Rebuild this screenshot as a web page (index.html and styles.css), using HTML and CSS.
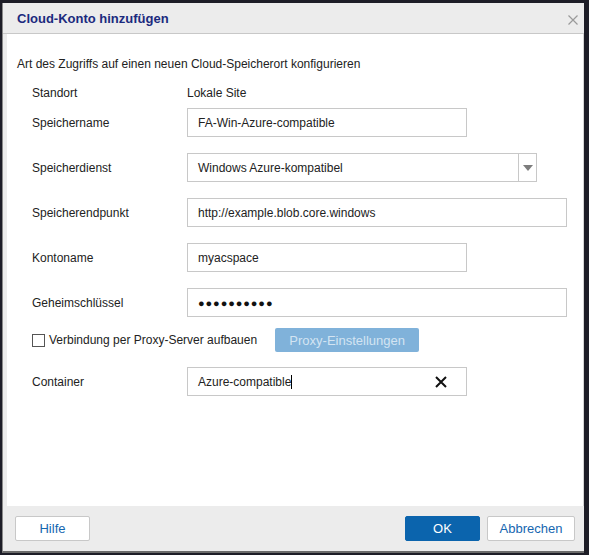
FILE: index.html
```html
<!DOCTYPE html>
<html lang="de">
<head>
    <meta charset="UTF-8">
    <title>Cloud-Konto hinzufügen</title>
    <link rel="stylesheet" href="styles.css">
</head>
<body>
    <div class="dialog">
        <div class="dlg-head">
            <h2>Cloud-Konto hinzufügen</h2>
            <svg class="close" width="10" height="10" viewBox="0 0 10 10"><path d="M0.5 0.5L9.5 9.5M9.5 0.5L0.5 9.5" stroke="#9a9a9a" stroke-width="1.2" fill="none"/></svg>
        </div>

        <div class="dlg-body">
            <p class="intro">Art des Zugriffs auf einen neuen Cloud-Speicherort konfigurieren</p>

            <div class="form">
                <div class="row row-static">
                    <label>Standort</label>
                    <span>Lokale Site</span>
                </div>
                <div class="row row-first">
                    <label>Speichername</label>
                    <input type="text" class="fld short" value="FA-Win-Azure-compatible">
                </div>
                <div class="row">
                    <label>Speicherdienst</label>
                    <div class="fld select">
                        <span class="sel-val">Windows Azure-kompatibel</span>
                        <span class="sel-btn"><svg width="10" height="6" viewBox="0 0 10 6"><path d="M0 0H10L5 6Z" fill="#7d7d7d"/></svg></span>
                    </div>
                </div>
                <div class="row">
                    <label>Speicherendpunkt</label>
                    <input type="text" class="fld long" value="http://example.blob.core.windows">
                </div>
                <div class="row">
                    <label>Kontoname</label>
                    <input type="text" class="fld short" value="myacspace">
                </div>
                <div class="row">
                    <label>Geheimschlüssel</label>
                    <div class="fld long pwd">●●●●●●●●●●</div>
                </div>
                <div class="row row-check">
                    <span class="chk"></span>
                    <span class="chk-text">Verbindung per Proxy-Server aufbauen</span>
                    <button class="proxy-btn" disabled>Proxy-Einstellungen</button>
                </div>
                <div class="row row-last">
                    <label>Container</label>
                    <div class="fld short clearable">
                        <span>Azure-compatible<span class="caret"></span></span>
                        <svg width="12" height="12" viewBox="0 0 12 12"><path d="M1 1L11 11M11 1L1 11" stroke="#111" stroke-width="2" fill="none"/></svg>
                    </div>
                </div>
            </div>
        </div>

        <div class="dlg-foot">
            <button class="btn">Hilfe</button>
            <div class="foot-right">
                <button class="btn primary">OK</button>
                <button class="btn wide">Abbrechen</button>
            </div>
        </div>
    </div>
</body>
</html>
```

FILE: styles.css
```css
:root {
    --navy: #1b2a7e;
    --blue: #0b64ad;
    --line: #c8c8c8;
    --panel: #ececec;
}
html, body { margin: 0; height: 100%; }
body {
    font-family: "Liberation Sans", Arial, sans-serif;
    font-size: 12px;
    color: #222;
    background: #1d1d27;
    padding: 3px 5px 0 2px;
    box-sizing: border-box;
}
.dialog {
    height: 550px;
    background: var(--panel);
    border-left: 1px solid #8a8a8a;
    border-bottom: 2px solid #6b6b6b;
    display: flex;
    flex-direction: column;
    box-sizing: border-box;
}
.dlg-head {
    height: 30px;
    border-bottom: 1px solid var(--line);
    display: flex;
    align-items: center;
    justify-content: space-between;
    padding: 0 6px 0 14px;
}
.dlg-head h2 {
    margin: 0;
    font-size: 13px;
    color: var(--navy);
    padding-top: 1px;
}
.close { margin-top: 3px; }
.dlg-body {
    flex: 1;
    background: white;
    margin: 0 0 0 4px;
    border-right: 1px solid #d4d4d4;
    padding: 22px 0 0 10px;
}
.intro { margin: 0; line-height: 16px; }
.form { padding-left: 15px; margin-top: 13px; }
.row {
    display: flex;
    align-items: center;
    margin-top: 16px;
}
.row label { width: 155px; flex: none; }
.row-static { margin-top: 0; height: 16px; }
.row-first { margin-top: 7px; }
.fld {
    height: 29px;
    border: 1px solid var(--line);
    box-sizing: border-box;
    padding: 0 10px;
    font: inherit;
    color: #222;
    background: white;
    outline: none;
}
.short { width: 280px; }
.long { width: 380px; }
.select {
    width: 350px;
    display: flex;
    align-items: center;
    justify-content: space-between;
    padding-right: 0;
}
.sel-btn {
    width: 17px;
    height: 27px;
    border-left: 1px solid var(--line);
    display: flex;
    align-items: center;
    justify-content: center;
}
.pwd {
    display: flex;
    align-items: center;
    font-size: 11px;
    letter-spacing: 0.9px;
    color: #111;
}
.row-check { margin-top: 11px; height: 24px; }
.chk {
    width: 11px;
    height: 11px;
    border: 1px solid #555;
    margin-right: 4px;
    background: white;
}
.proxy-btn {
    margin-left: 18px;
    width: 144px;
    height: 24px;
    border: none;
    border-radius: 2px;
    background: #80b2da;
    color: #d3e4f2;
    font: inherit;
    font-size: 13px;
}
.row-last { margin-top: 15px; }
.clearable {
    display: flex;
    align-items: center;
    justify-content: space-between;
    padding-right: 19px;
}
.caret {
    display: inline-block;
    width: 1px;
    height: 14px;
    background: #000;
    vertical-align: -3px;
}
.dlg-foot {
    height: 45px;
    display: flex;
    align-items: center;
    justify-content: space-between;
    padding: 0 9px 0 12px;
    flex: none;
}
.foot-right { display: flex; gap: 7px; }
.btn {
    width: 75px;
    height: 25px;
    background: white;
    border: 1px solid var(--line);
    border-radius: 2px;
    color: #1566b0;
    font: inherit;
    font-size: 13px;
}
.btn.primary { background: var(--blue); border-color: var(--blue); color: white; }
.btn.wide { width: 88px; }
```
